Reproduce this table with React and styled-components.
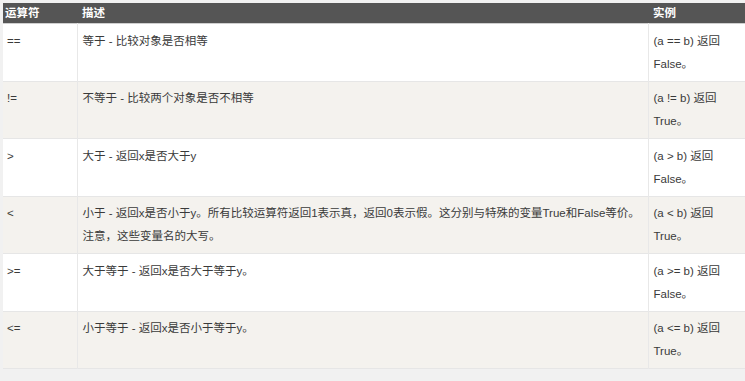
import React from "react";
import styled, { createGlobalStyle } from "styled-components";

const Global = createGlobalStyle`
  html, body { margin: 0; padding: 0; background: #f1f1f1; overflow: hidden; }
  body { font-family: "Liberation Sans", Arial, "Noto Sans CJK SC", sans-serif; }
`;

const Page = styled.div`
  padding: 3px 0 0 3px;
  width: 745px;
  height: 381px;
  box-sizing: border-box;
  background: #f1f1f1;
`;

const Table = styled.table`
  width: 745px;
  table-layout: fixed;
  border-collapse: collapse;
  font-size: 11.5px;
  color: #3a3a3a;
`;

const HeadRow = styled.tr`
  background: #555;
  border-bottom: 1px solid #cfcfcf;
`;

const HeadCell = styled.th`
  text-align: left;
  font-weight: bold;
  color: #fff;
  padding: 2px 5px 2px ${(p) => (p.$first ? "2px" : "5px")};
  line-height: 16px;
  height: 16px;
`;

const Row = styled.tr`
  background: ${(p) => (p.$alt ? "#f4f2ee" : "#ffffff")};
  border-bottom: 1px solid #e6e6e6;
`;

const Cell = styled.td`
  vertical-align: top;
  padding: 5.5px 5px 5px ${(p) => (p.$first ? "4px" : "5px")};
  line-height: 23px;
  height: 46px;
  border-left: ${(p) => (p.$first ? "none" : "1px solid #e8e8e8")};
`;

const rows = [
  ["==", "等于 - 比较对象是否相等", "(a == b) 返回 False。"],
  ["!=", "不等于 - 比较两个对象是否不相等", "(a != b) 返回 True。"],
  [">", "大于 - 返回x是否大于y", "(a > b) 返回 False。"],
  [
    "<",
    "小于 - 返回x是否小于y。所有比较运算符返回1表示真，返回0表示假。这分别与特殊的变量True和False等价。注意，这些变量名的大写。",
    "(a < b) 返回 True。",
  ],
  [">=", "大于等于 - 返回x是否大于等于y。", "(a >= b) 返回 False。"],
  ["<=", "小于等于 - 返回x是否小于等于y。", "(a <= b) 返回 True。"],
];

export default function App() {
  return (
    <>
      <Global />
      <Page>
        <Table>
          <colgroup>
            <col style={{ width: 74 }} />
            <col style={{ width: 571 }} />
            <col style={{ width: 100 }} />
          </colgroup>
          <thead>
            <HeadRow>
              <HeadCell $first>运算符</HeadCell>
              <HeadCell>描述</HeadCell>
              <HeadCell>实例</HeadCell>
            </HeadRow>
          </thead>
          <tbody>
            {rows.map((r, i) => (
              <Row key={i} $alt={i % 2 === 1}>
                <Cell $first>{r[0]}</Cell>
                <Cell>{r[1]}</Cell>
                <Cell>{r[2]}</Cell>
              </Row>
            ))}
          </tbody>
        </Table>
      </Page>
    </>
  );
}
